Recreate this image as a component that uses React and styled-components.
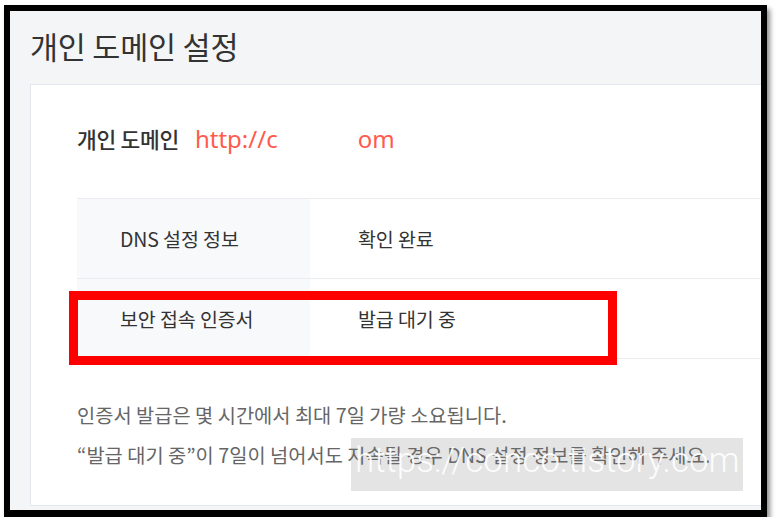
import React from 'react';
import styled, { createGlobalStyle } from 'styled-components';

const GlobalStyle = createGlobalStyle`
  html, body {
    margin: 0;
    padding: 0;
    background: #ffffff;
  }
  body {
    font-family: "Noto Sans CJK KR", "Noto Sans", sans-serif;
  }
`;

const Frame = styled.div`
  box-sizing: border-box;
  width: 763px;
  height: 512px;
  margin: 5px 0 0 4px;
  border: 6px solid #000;
  border-bottom-width: 7px;
  background: #f4f5f7;
  box-shadow: 3px 4px 5px rgba(0, 0, 0, 0.45);
  display: flex;
  flex-direction: column;
  overflow: hidden;
`;

const Title = styled.h1`
  margin: 0;
  padding: 0 0 4px 20px;
  height: 69px;
  display: flex;
  align-items: center;
  font-size: 30.5px;
  font-weight: 400;
  color: #333;
  letter-spacing: -0.2px;
`;

const Card = styled.section`
  flex: 1;
  margin: 0 0 4px 20px;
  background: #fff;
  border: 1px solid #e3e7ee;
  border-right: none;
  padding: 0 0 0 46px;
  position: relative;
`;

const DomainRow = styled.div`
  box-sizing: border-box;
  height: 113px;
  padding-bottom: 6px;
  display: flex;
  align-items: center;
  gap: 16px;
`;

const DomainLabel = styled.span`
  font-size: 21.5px;
  font-weight: 500;
  color: #333;
  letter-spacing: -0.3px;
`;

const DomainValue = styled.span`
  font-family: "Noto Sans", sans-serif;
  font-size: 24px;
  color: #ff5a4c;
  display: flex;
`;

const Hidden = styled.span`
  width: 80px;
`;

const Table = styled.div`
  border-top: 1px solid #eaecf0;
`;

const Row = styled.div`
  position: relative;
  display: grid;
  grid-template-columns: 233px 1fr;
  height: 79px;
  border-bottom: 1px solid #eaecf0;
`;

const Cell = styled.div`
  display: flex;
  align-items: center;
  padding-left: ${({ $head }) => ($head ? '43px' : '48px')};
  background: ${({ $head }) => ($head ? '#f8f9fb' : '#fff')};
  font-size: 19.5px;
  color: #333;
  letter-spacing: -0.1px;
`;

const Highlight = styled.div`
  position: absolute;
  left: -8px;
  top: 12px;
  width: 548px;
  height: 74px;
  box-sizing: border-box;
  border: 9px solid #ff0000;
  pointer-events: none;
`;

const Notes = styled.div`
  padding-top: 36px;
  font-size: 19.8px;
  color: #666;
  letter-spacing: 0;
  line-height: 40px;
`;

const Watermark = styled.div`
  position: absolute;
  left: 320px;
  top: 353px;
  width: 392px;
  height: 53px;
  background: rgba(120, 120, 120, 0.2);
  color: rgba(255, 255, 255, 0.92);
  font-family: Roboto, "Noto Sans", sans-serif;
  font-weight: 300;
  font-size: 35px;
  line-height: 46px;
  padding-left: 4px;
  box-sizing: border-box;
  white-space: nowrap;
  overflow: hidden;
`;

const rows = [
  { label: 'DNS 설정 정보', value: '확인 완료' },
  { label: '보안 접속 인증서', value: '발급 대기 중', marked: true },
];

const App = () => (
  <>
    <GlobalStyle />
    <Frame>
      <Title>개인 도메인 설정</Title>
      <Card>
        <DomainRow>
          <DomainLabel>개인 도메인</DomainLabel>
          <DomainValue>
            http://c
            <Hidden />
            om
          </DomainValue>
        </DomainRow>
        <Table>
          {rows.map((row) => (
            <Row key={row.label}>
              <Cell $head>{row.label}</Cell>
              <Cell>{row.value}</Cell>
              {row.marked && <Highlight />}
            </Row>
          ))}
        </Table>
        <Notes>
          <div>인증서 발급은 몇 시간에서 최대 7일 가량 소요됩니다.</div>
          <div>“발급 대기 중”이 7일이 넘어서도 지속될 경우 DNS 설정 정보를 확인해 주세요.</div>
        </Notes>
        <Watermark>https://conco.tistory.com</Watermark>
      </Card>
    </Frame>
  </>
);

export default App;
